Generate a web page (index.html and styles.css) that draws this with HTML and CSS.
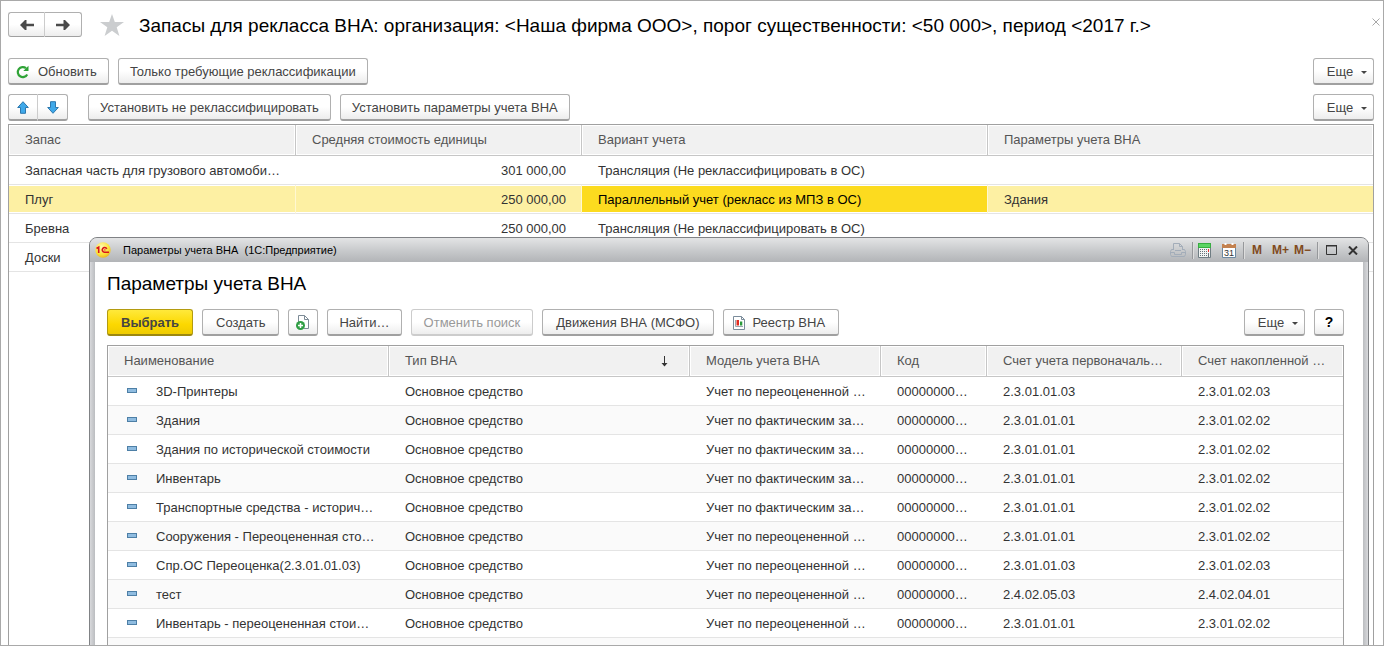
FILE: index.html
```
<!DOCTYPE html>
<html lang="ru">
<head>
<meta charset="utf-8">
<title>Запасы для рекласса ВНА</title>
<link rel="stylesheet" href="styles.css">
</head>
<body>
<main class="form">
  <header class="form-head">
    <div class="btn-pair nav">
      <button class="btn" aria-label="Назад"><svg width="14" height="10" viewBox="0 0 14 10"><path d="M0 5 5 0 6.500 0V3.700H14V6.300H6.500V10H5Z" fill="#4a4a4a"/></svg></button>
      <button class="btn" aria-label="Вперед"><svg width="14" height="10" viewBox="0 0 14 10"><path d="M14 5 9 0H7.500V3.700H0V6.300H7.500V10H9Z" fill="#4a4a4a"/></svg></button>
    </div>
    <svg class="star" width="24" height="22" viewBox="0 0 24 22"><path d="M12 0 14.800 8H24L16.700 13.300 19.400 22 12 16.700 4.600 22 7.300 13.300 0 8H9.200Z" fill="#cbcdcf"/></svg>
    <h1 class="title">Запасы для рекласса ВНА: организация: &lt;Наша фирма ООО&gt;, порог существенности: &lt;50 000&gt;, период &lt;2017 г.&gt;</h1>
    <button class="form-close" aria-label="Закрыть"><svg width="8" height="8" viewBox="0 0 8 8"><path d="M.5.5 7.500 7.500M7.500.5.5 7.500" stroke="#a8a8a8" fill="none"/></svg></button>
  </header>

  <div class="toolbar">
    <button class="btn refresh"><svg width="14" height="14" viewBox="0 0 14 14"><path d="M11.200 9.400A5 5 0 1 1 10 3.200" fill="none" stroke="#2fa336" stroke-width="2.200"/><path d="M12.500.8V6H7.300Z" fill="#2fa336"/></svg>Обновить</button>
    <button class="btn">Только требующие реклассификации</button>
    <button class="btn more push">Еще<span class="caret"></span></button>
  </div>

  <div class="toolbar">
    <div class="btn-pair move">
      <button class="btn" aria-label="Вверх"><svg width="12" height="13" viewBox="0 0 12 13"><path d="M6 .7 11.300 6.500H8.500V12.300H3.500V6.500H.7Z" fill="#3fa9ea" stroke="#2c77ad"/></svg></button>
      <button class="btn" aria-label="Вниз"><svg width="12" height="13" viewBox="0 0 12 13"><path d="M6 12.300.7 6.500H3.500V.7H8.500V6.500H11.300Z" fill="#3fa9ea" stroke="#2c77ad"/></svg></button>
    </div>
    <button class="btn">Установить не реклассифицировать</button>
    <button class="btn">Установить параметры учета ВНА</button>
    <button class="btn more push">Еще<span class="caret"></span></button>
  </div>

  <div class="grid stock">
    <table>
      <colgroup><col class="c-item"><col class="c-cost"><col class="c-variant"><col></colgroup>
      <thead><tr><th>Запас</th><th>Средняя стоимость единицы</th><th>Вариант учета</th><th>Параметры учета ВНА</th></tr></thead>
      <tbody>
        <tr><td>Запасная часть для грузового автомоби…</td><td class="num">301 000,00</td><td>Трансляция (Не реклассифицировать в ОС)</td><td></td></tr>
        <tr class="selected"><td>Плуг</td><td class="num">250 000,00</td><td class="current">Параллельный учет (рекласс из МПЗ в ОС)</td><td>Здания</td></tr>
        <tr><td>Бревна</td><td class="num">250 000,00</td><td>Трансляция (Не реклассифицировать в ОС)</td><td></td></tr>
        <tr><td>Доски</td><td class="num"></td><td></td><td></td></tr>
      </tbody>
    </table>
  </div>

  <section class="dialog" role="dialog" aria-labelledby="dialog-title">
    <div class="dialog-bar">
      <svg class="logo" width="16" height="16" viewBox="0 0 16 16"><defs><radialGradient id="sun" cx=".4" cy=".3" r=".8"><stop offset="0" stop-color="#fffbb0"/><stop offset=".6" stop-color="#fbe13a"/><stop offset="1" stop-color="#e9a91d"/></radialGradient></defs><circle cx="8" cy="8" r="7.700" fill="url(#sun)"/><path d="M1.500 6.500 3.700 5.200V11M11.800 6.800A2.400 2.400 0 1 0 9.500 10.300H14M10.300 7.900H9.500" fill="none" stroke="#d8141c" stroke-width="1.600"/></svg>
      <span class="bar-text">Параметры учета ВНА&nbsp; (1С:Предприятие)</span>
      <div class="bar-tools">
        <button class="tool print" aria-label="Печать"><svg width="16" height="14" viewBox="0 0 16 14"><path d="M3.500 7V.5H9.500L12.500 3.500V7M9.500.5V3.500H12.500M3.500 6.500H1.500L.5 8.500V11.500L1.500 13.500H14.500L15.500 11.500V8.500L14.500 6.500H12.500M.5 9.500H4.500V11.500H11.500V9.500H15.500M5 7.500H11" fill="none" stroke="#a3adb9"/></svg></button>
        <i class="sep"></i>
        <button class="tool calc" aria-label="Калькулятор"><svg width="13" height="15" viewBox="0 0 13 15"><path d="M.5.5H12.500V14.500H.5Z" fill="#f2f4f3" stroke="#6f7d83"/><path d="M0 0H13V5H0Z" fill="#38ad42"/><path d="M1 1H12V4H1Z" fill="#5bd463"/><path d="M2.500 6V14M4.500 6V14M6.500 6V14M8.500 6V14" stroke="#65727a" stroke-dasharray="1 1"/><path d="M10.500 6V9" stroke="#e33"/><path d="M10.500 10V14" stroke="#65727a"/></svg></button>
        <button class="tool" aria-label="Календарь"><svg width="14" height="15" viewBox="0 0 14 15"><path d="M.5 1.500H13.500V14.500H.5Z" fill="#fff" stroke="#6b88a0"/><path d="M0 1H14V5H0Z" fill="#c3814f"/><path d="M3.500 0V2M10.500 0V2" stroke="#fff" stroke-width="2"/><text x="7" y="13" text-anchor="middle" class="cal-day">31</text></svg></button>
        <i class="sep"></i>
        <div class="memory"><button class="tool">M</button><button class="tool plus">M+</button><button class="tool">M−</button></div>
        <i class="sep"></i>
        <button class="tool win" aria-label="Развернуть"><svg width="11" height="10" viewBox="0 0 11 10"><path d="M.5 1H10.500V9.500H.5Z" fill="none" stroke="#333"/><path d="M0 .5H11" stroke="#333"/></svg></button>
        <button class="tool" aria-label="Закрыть окно"><svg width="10" height="9" viewBox="0 0 10 9"><path d="M1 .5 9 8.500M9 .5 1 8.500" stroke="#333" stroke-width="2"/></svg></button>
      </div>
    </div>
    <div class="dialog-body">
      <h2 class="title" id="dialog-title">Параметры учета ВНА</h2>
      <div class="dialog-tools">
        <button class="btn primary">Выбрать</button>
        <button class="btn">Создать</button>
        <button class="btn icon" aria-label="Создать копированием"><svg width="14" height="15" viewBox="0 0 14 15"><path d="M2.500 7V.5H8.500L12.500 4.500V13.500H8" fill="#fff" stroke="#7d8b96"/><path d="M8.500.5V4.500H12.500" fill="none" stroke="#7d8b96"/><circle cx="4.500" cy="10.500" r="4.500" fill="#2f9e44"/><path d="M4.500 8V13M2 10.500H7" stroke="#fff" stroke-width="1.500"/></svg></button>
        <button class="btn tight">Найти…</button>
        <button class="btn" disabled>Отменить поиск</button>
        <button class="btn">Движения ВНА (МСФО)</button>
        <button class="btn registry"><svg width="12" height="14" viewBox="0 0 12 14"><path d="M.5.5H8.500L11.500 3.500V13.500H.5Z" fill="#fff" stroke="#7b8c9b"/><path d="M8.500.5V3.500H11.500" fill="none" stroke="#7b8c9b"/><path d="M2.500 4V10.500H10" fill="none" stroke="#9aa6b0"/><path d="M3.500 4H6V9.500H3.500Z" fill="#e02b20"/><path d="M7 5.500H9.300V9.500H7Z" fill="#2c9b3c"/></svg>Реестр ВНА</button>
        <button class="btn more push">Еще<span class="caret"></span></button>
        <button class="btn help">?</button>
      </div>
      <div class="grid params">
        <table>
          <colgroup><col class="c-name"><col class="c-type"><col class="c-model"><col class="c-code"><col class="c-first"><col></colgroup>
          <thead><tr><th>Наименование</th><th><div class="sorted">Тип ВНА<svg width="7" height="11" viewBox="0 0 7 11"><path d="M3.500 0V9" stroke="#333"/><path d="M.5 7H6.500L3.500 10.500Z" fill="#333"/></svg></div></th><th>Модель учета ВНА</th><th>Код</th><th>Счет учета первоначаль…</th><th>Счет накопленной …</th></tr></thead>
          <tbody>
            <tr><td><i class="mark"></i>3D-Принтеры</td><td>Основное средство</td><td>Учет по переоцененной …</td><td>00000000…</td><td>2.3.01.01.03</td><td>2.3.01.02.03</td></tr>
            <tr><td><i class="mark"></i>Здания</td><td>Основное средство</td><td>Учет по фактическим за…</td><td>00000000…</td><td>2.3.01.01.01</td><td>2.3.01.02.02</td></tr>
            <tr><td><i class="mark"></i>Здания по исторической стоимости</td><td>Основное средство</td><td>Учет по фактическим за…</td><td>00000000…</td><td>2.3.01.01.01</td><td>2.3.01.02.02</td></tr>
            <tr><td><i class="mark"></i>Инвентарь</td><td>Основное средство</td><td>Учет по фактическим за…</td><td>00000000…</td><td>2.3.01.01.01</td><td>2.3.01.02.02</td></tr>
            <tr><td><i class="mark"></i>Транспортные средства - историч…</td><td>Основное средство</td><td>Учет по фактическим за…</td><td>00000000…</td><td>2.3.01.01.01</td><td>2.3.01.02.02</td></tr>
            <tr><td><i class="mark"></i>Сооружения - Переоцененная сто…</td><td>Основное средство</td><td>Учет по переоцененной …</td><td>00000000…</td><td>2.3.01.01.01</td><td>2.3.01.02.02</td></tr>
            <tr><td><i class="mark"></i>Спр.ОС Переоценка(2.3.01.01.03)</td><td>Основное средство</td><td>Учет по переоцененной …</td><td>00000000…</td><td>2.3.01.01.03</td><td>2.3.01.02.03</td></tr>
            <tr><td><i class="mark"></i>тест</td><td>Основное средство</td><td>Учет по переоцененной …</td><td>00000000…</td><td>2.4.02.05.03</td><td>2.4.02.04.01</td></tr>
            <tr><td><i class="mark"></i>Инвентарь - переоцененная стои…</td><td>Основное средство</td><td>Учет по переоцененной …</td><td>00000000…</td><td>2.3.01.01.01</td><td>2.3.01.02.02</td></tr>
            <tr><td></td><td></td><td></td><td></td><td></td><td></td></tr>
          </tbody>
        </table>
      </div>
    </div>
  </section>
</main>
</body>
</html>
```
FILE: styles.css
```
* { box-sizing: border-box; }

body {
  margin: 0;
  background: #fff;
  color: #333;
  font: 13px/16px "Liberation Sans", Arial, sans-serif;
}

button { font: inherit; color: inherit; margin: 0; }
svg { display: block; flex: none; }

.form {
  position: relative;
  display: flex;
  flex-direction: column;
  height: 100vh;
  padding: 11px 9px 0 7px;
  border: 1px solid #a9a9a9;
  overflow: hidden;
}

.form-head { display: flex; align-items: center; height: 25px; margin-bottom: 21px; }
.star { margin: 0 15px 0 18px; }
.title { margin: 0; font-size: 19px; line-height: 24px; font-weight: 400; color: #000; white-space: nowrap; }
.form-head .title { padding-top: 3px; }
.form-close { margin: 0 -6px 6px auto; padding: 0; border: 0; background: none; }

.btn {
  display: flex;
  align-items: center;
  justify-content: center;
  height: 27px;
  padding: 2px 13px 0;
  border: 1px solid #b0b0b0;
  border-bottom: 2px solid #a0a0a0;
  border-radius: 3px;
  background: linear-gradient(#fff 50%, #ededed);
  color: #444;
  white-space: nowrap;
}
.toolbar .btn, .btn.tight { padding: 2px 11px 0; }
.btn:disabled { padding: 2px 12px 0; color: #999; border-color: #ccc; }
.btn.primary { border-color: #b39b10; border-bottom-color: #9c8810; background: linear-gradient(#ffe93b, #fcd800 60%, #efcb00); font-weight: 700; }
.btn.icon { width: 30px; padding: 0; }
.btn.help { width: 30px; padding: 0; color: #000; font-size: 14px; font-weight: 700; }
.toolbar .refresh { gap: 8px; padding: 1px 11px 0 7px; }
.registry { gap: 8px; padding-left: 9px; }
.btn.more { gap: 8px; width: 61px; padding: 2px 6px 0 13px; }
.push { margin-left: auto; }
.caret { border: 3px solid transparent; border-top-color: #444; border-bottom: 0; }

.btn-pair { display: flex; }
.toolbar .btn-pair .btn, .btn-pair .btn { padding: 0; }
.btn-pair .btn:first-child { border-radius: 3px 0 0 3px; border-right-color: #ccc; }
.btn-pair .btn:last-child { border-radius: 0 3px 3px 0; border-left: 0; }
.nav .btn { width: 37px; height: 25px; border-bottom-width: 1px; }
.move { margin-right: 11px; }
.move .btn { width: 30px; }

.toolbar { display: flex; gap: 9px; margin-bottom: 9px; }
.toolbar + .grid { margin-top: -6px; }

.grid { border: 1px solid #a0a0a0; border-bottom: 0; background: #fff; overflow: hidden; }
.stock { flex: 1; min-height: 0; }
table { width: 100%; border-collapse: separate; border-spacing: 0; table-layout: fixed; }
th, td { padding: 0 15px 0 16px; text-align: left; font-weight: 400; white-space: nowrap; overflow: hidden; }
th { height: 31px; border-right: 1px solid #c6c6c6; border-bottom: 1px solid #c6c6c6; background: #f1f1f1; color: #555; box-shadow: inset 0 0 0 1px #fff; }
th:last-child { border-right: 0; }
td { height: 29px; padding-top: 2px; border-bottom: 1px solid #e4e4e4; }
.num { padding-right: 16px; text-align: right; }
.selected td { background: #fdf0a3; border-right: 1px solid #fff8d2; box-shadow: inset 0 1px #fff, inset 0 -1px #fff; color: #333; }
.selected td:last-child { border-right: 0; }
.selected .num { padding-right: 15px; }
.selected .current { background: #fcdb1f; color: #000; }
.c-item { width: 287px; }
.c-cost { width: 286px; }
.c-variant { width: 406px; }

.dialog {
  position: absolute;
  left: 88px;
  right: 14px;
  top: 236px;
  border: 1px solid #808285;
  border-radius: 8px 8px 0 0;
  background: linear-gradient(90deg, #d8d9dc, #bbbdc0 5px, #bbbdc0 calc(100% - 5px), #d8d9dc);
  overflow: hidden;
}
.dialog-bar { display: flex; align-items: center; height: 24px; padding: 0 10px 0 5px; background: linear-gradient(#e3e4e5, #c9cbcd 50%, #b2b4b7); }
.bar-text { margin-left: 12px; color: #000; font-size: 11px; }
.bar-tools { display: flex; align-items: center; margin-left: auto; }
.tool { padding: 0; border: 0; background: none; }
.sep { width: 1px; height: 17px; background: #96989b; box-shadow: 1px 0 #ddd; }
.print { margin-right: 6px; }
.calc { margin: 0 11px 0 5px; }
.calc + .tool { margin-right: 7px; }
.cal-day { font-size: 9px; fill: #333; }
.memory { display: flex; margin: 0 6px 0 8px; color: #804a20; font-size: 12px; font-weight: 700; }
.plus { margin: 0 5px 0 10px; }
.win { margin: 0 11px 0 8px; }
.dialog-body { margin: 0 5px; padding: 10px 19px 0 12px; background: #fff; }
.dialog-tools { display: flex; gap: 9px; margin: 13px 0 9px; }

.c-name { width: 281px; }
.c-type { width: 301px; }
.c-model { width: 191px; }
.c-code { width: 106px; }
.c-first { width: 195px; }
.params tbody tr:nth-child(even) { background: #fafafa; }
.sorted { display: flex; align-items: center; justify-content: space-between; padding-right: 6px; }
.mark {
  display: inline-block;
  width: 10px;
  height: 5px;
  margin: 0 19px 3px 3px;
  border: 1px solid #4d7fa6;
  background: #8fbce0;
  vertical-align: baseline;
}
```
